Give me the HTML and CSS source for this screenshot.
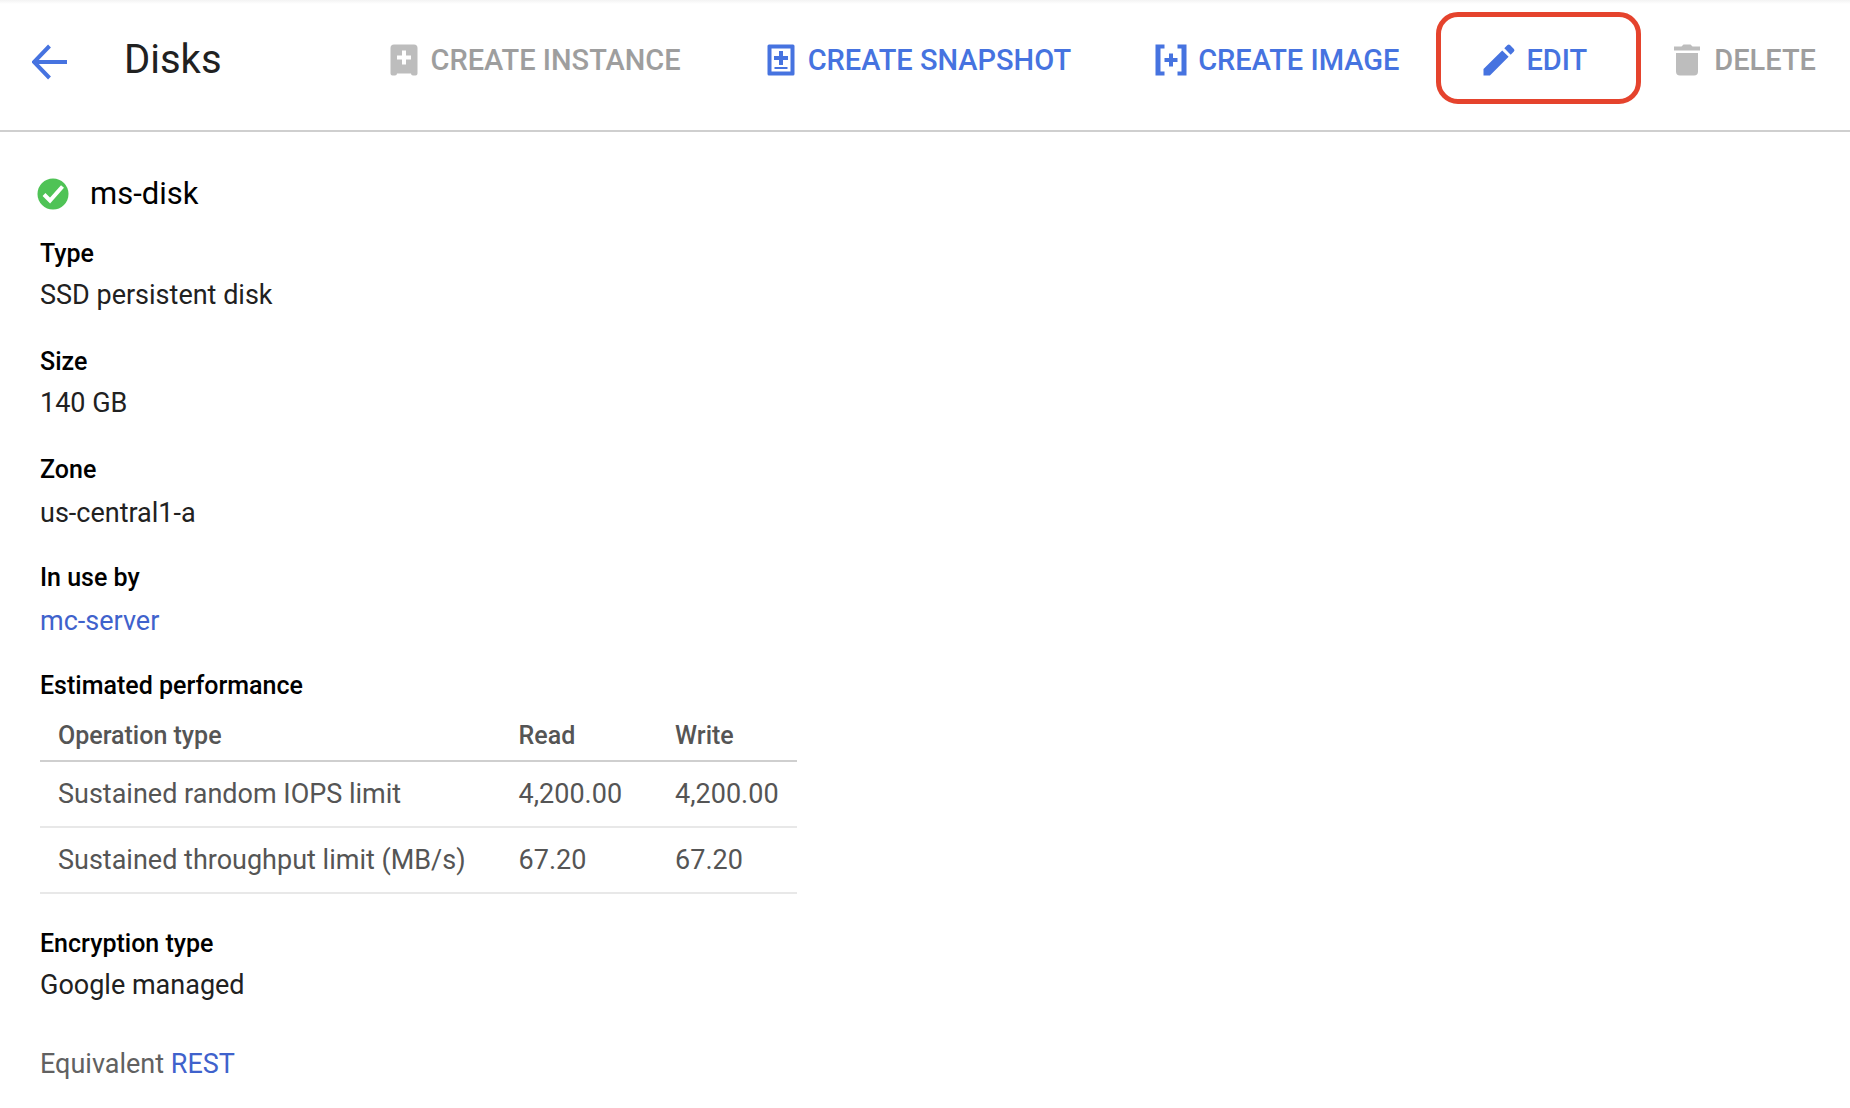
FILE: index.html
```html
<!DOCTYPE html>
<html lang="en">
<head>
<meta charset="utf-8">
<title>Disks</title>
<meta name="viewport" content="width=device-width, initial-scale=1">
<link rel="stylesheet" href="styles.css">
</head>
<body>
<header class="toolbar">
  <a class="back" href="#" aria-label="Back">
    <svg class="icon" viewBox="0 0 36 36" fill="none" stroke="currentColor" stroke-width="4"><path d="M35 18H2.500M17.500 2L2 18l15.500 16"/></svg>
  </a>
  <h1 class="title">Disks</h1>
  <nav class="actions" aria-label="Disk actions">
    <button class="action" type="button" disabled>
      <svg class="icon" viewBox="0 0 36 36" fill="currentColor"><path fill-rule="evenodd" d="M8 2.500h20a3.500 3.500 0 0 1 3.500 3.500v25.500a2 2 0 0 1-2 2h-2.500a2 2 0 0 1-2-2h-14a2 2 0 0 1-2 2H6.500a2 2 0 0 1-2-2V6A3.500 3.500 0 0 1 8 2.500zM16 8.500v5h-5v4h5v5h4v-5h5v-4h-5v-5z"/></svg>
      <span>CREATE INSTANCE</span>
    </button>
    <button class="action" type="button">
      <svg class="icon" viewBox="0 0 36 36" fill="currentColor"><path fill-rule="evenodd" d="M6 2.500h24q1.500 0 1.500 1.500v28q0 1.500-1.500 1.500H6q-1.500 0-1.500-1.500V4q0-1.500 1.500-1.500zM8.500 6.500v23h19v-23z"/><path d="M16 9h4v5h5v4h-5v5h-4v-5h-5v-4h5zM11.500 25h13v2h-13z"/></svg>
      <span>CREATE SNAPSHOT</span>
    </button>
    <button class="action" type="button">
      <svg class="icon" viewBox="0 0 36 36" fill="currentColor"><path d="M2.500 2.500h9v4h-4v23h4v4h-9zM33.500 2.500h-9v4h4v23h-4v4h9zM16 11.500h4V16h4.500v4H20v4.500h-4V20h-4.500v-4H16z"/></svg>
      <span>CREATE IMAGE</span>
    </button>
    <button class="action action--highlighted" type="button">
      <svg class="icon" viewBox="0 0 36 36" fill="currentColor"><path d="M2.500 27.100v6.400h6.400L27.600 14.800l-6.400-6.400zM32.900 9.500a1.800 1.800 0 0 0 0-2.500L29 3.100a1.800 1.800 0 0 0-2.500 0l-3.200 3.200 6.400 6.400z"/></svg>
      <span>EDIT</span>
    </button>
    <button class="action" type="button" disabled>
      <svg class="icon" viewBox="0 0 36 36" fill="currentColor"><path d="M7 11h22v18.500a4 4 0 0 1-4 4H11a4 4 0 0 1-4-4zM5 4.500h7.500l2-2h7l2 2H31v4H5z"/></svg>
      <span>DELETE</span>
    </button>
  </nav>
</header>
<main class="details">
  <h2 class="disk-name">
    <svg class="status" viewBox="0 0 32 32" role="img" aria-label="Ready"><circle cx="16" cy="16" r="15.500" fill="#4fc356"/><path d="M7 16.500l6 6L25.500 8.500" fill="none" stroke="#fff" stroke-width="4"/></svg>
    <span>ms-disk</span>
  </h2>
  <section class="field">
    <h3 class="label">Type</h3>
    <p class="value">SSD persistent disk</p>
  </section>
  <section class="field">
    <h3 class="label">Size</h3>
    <p class="value">140 GB</p>
  </section>
  <section class="field field--tall">
    <h3 class="label">Zone</h3>
    <p class="value">us-central1-a</p>
  </section>
  <section class="field field--tall">
    <h3 class="label">In use by</h3>
    <p class="value"><a href="#">mc-server</a></p>
  </section>
  <section class="performance">
    <h3 class="label" id="performance-label">Estimated performance</h3>
    <table class="table" aria-labelledby="performance-label">
      <thead>
        <tr><th scope="col">Operation type</th><th scope="col">Read</th><th scope="col">Write</th></tr>
      </thead>
      <tbody>
        <tr><td>Sustained random IOPS limit</td><td>4,200.00</td><td>4,200.00</td></tr>
        <tr><td>Sustained throughput limit (MB/s)</td><td>67.20</td><td>67.20</td></tr>
      </tbody>
    </table>
  </section>
  <section>
    <h3 class="label">Encryption type</h3>
    <p class="value">Google managed</p>
  </section>
  <p class="equivalent">Equivalent <a href="#">REST</a></p>
</main>
</body>
</html>
```
FILE: styles.css
```css
* {
  box-sizing: border-box;
}

body {
  margin: 0;
  background: #fff;
  color: #212121;
  font: 27px/32px Roboto, "Liberation Sans", sans-serif;
}

h1, h2, h3, p {
  margin: 0;
}

a {
  color: #3f62cc;
  text-decoration: none;
}

.toolbar {
  display: flex;
  align-items: center;
  min-height: 132px;
  padding: 0 32px 10px;
  border-bottom: 2px solid #cfcfcf;
  background: linear-gradient(#f3f3f3, #fff 4px);
}

.icon {
  display: block;
  flex: none;
  width: 36px;
  height: 36px;
}

.back {
  margin-top: 4px;
  color: #4673e0;
}

.title {
  margin-left: 56px;
  font-size: 40px;
  font-weight: 400;
  line-height: 48px;
}

.actions {
  display: flex;
  flex: 1;
  gap: 82px;
  margin-left: 164px;
}

.action {
  position: relative;
  display: flex;
  align-items: center;
  gap: 9px;
  padding: 0;
  border: 0;
  background: none;
  color: #4673e0;
  font: 500 29px/36px Roboto, "Liberation Sans", sans-serif;
  white-space: nowrap;
  cursor: pointer;
}

.action:disabled {
  color: #9e9e9e;
  cursor: default;
}

.action:disabled .icon {
  color: #bdbdbd;
}

/* Ring that calls out the edit action, drawn over the toolbar */
.action--highlighted::after {
  content: "";
  position: absolute;
  inset: -30px -54px -26px -45px;
  border: 5px solid #e5432d;
  border-radius: 22px;
  pointer-events: none;
}

.details {
  padding: 42px 40px 28px;
}

.disk-name {
  display: flex;
  align-items: center;
  gap: 21px;
  margin: 0 0 22px -3px;
  color: #000;
  font-size: 31px;
  font-weight: 400;
  line-height: 40px;
}

.status {
  width: 32px;
  height: 32px;
}

.field {
  margin-bottom: 26px;
}

.label {
  color: #000;
  font-size: 25px;
  font-weight: 500;
  line-height: 36px;
}

.value {
  line-height: 46px;
}

.field--tall {
  margin-bottom: 22px;
}

.field--tall .value {
  line-height: 50px;
}

.performance {
  margin-bottom: 32px;
}

.table {
  border-collapse: separate;
  border-spacing: 0;
  color: #555;
  text-align: left;
}

.table th {
  padding: 16px 35px 8px 18px;
  border-bottom: 2px solid #cfcfcf;
  font-size: 25px;
  font-weight: 500;
}

.table td {
  padding: 16px 35px 16px 18px;
  border-bottom: 2px solid #e8e8e8;
}

.table th:last-child,
.table td:last-child {
  padding-right: 18px;
}

.equivalent {
  margin-top: 40px;
  color: #616161;
}
```
